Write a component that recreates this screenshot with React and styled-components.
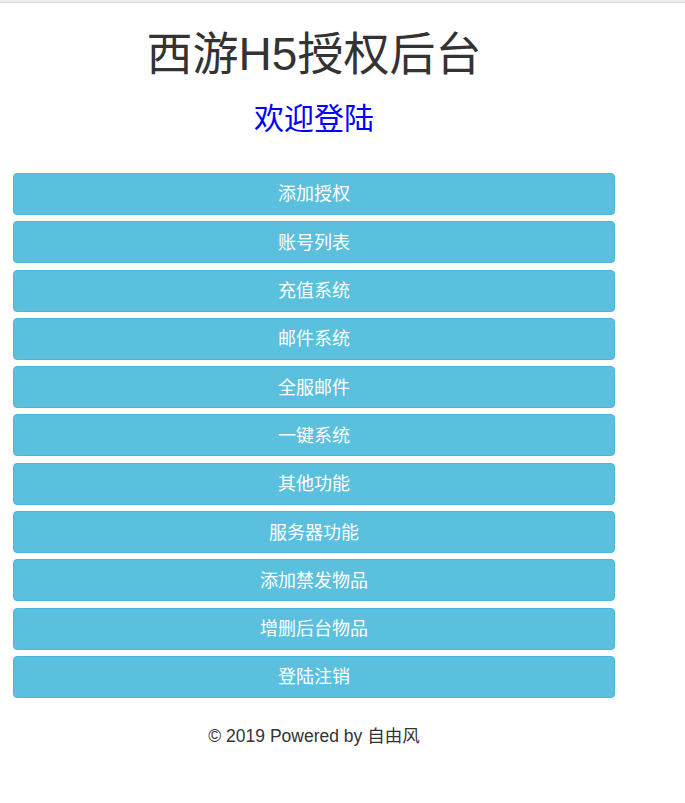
import React from "react";
import styled, { createGlobalStyle } from "styled-components";

const GlobalStyle = createGlobalStyle`
  body {
    margin: 0;
    background: #fff;
    font-family: "Liberation Sans", "Noto Sans CJK SC", sans-serif;
    color: #333;
  }
`;

const menu = [
  "添加授权",
  "账号列表",
  "充值系统",
  "邮件系统",
  "全服邮件",
  "一键系统",
  "其他功能",
  "服务器功能",
  "添加禁发物品",
  "增删后台物品",
  "登陆注销",
];

export default function App() {
  return (
    <>
      <GlobalStyle />
      <TopBar />
      <Wrap>
        <Title>西游H5授权后台</Title>
        <Welcome>欢迎登陆</Welcome>
        <MenuList>
          {menu.map((item) => (
            <MenuButton key={item} type="button">
              {item}
            </MenuButton>
          ))}
        </MenuList>
        <Footer>© 2019 Powered by 自由风</Footer>
      </Wrap>
    </>
  );
}

const TopBar = styled.div`
  height: 2px;
  background: #ececec;
  border-bottom: 1px solid #d9d9d9;
`;

const Wrap = styled.div`
  width: 602px;
  margin-left: 13px;
`;

const Title = styled.h1`
  margin: 25.7px 0 0;
  font-size: 46px;
  line-height: 50.6px;
  font-weight: 400;
  text-align: center;
  color: #333;
`;

const Welcome = styled.h2`
  margin: 23.2px 0 0;
  font-size: 30px;
  line-height: 33px;
  font-weight: 400;
  text-align: center;
  color: #0000ff;
`;

const MenuList = styled.div`
  display: flex;
  flex-direction: column;
  gap: 6.3px;
  margin-top: 37.5px;
`;

const MenuButton = styled.button`
  height: 42px;
  padding: 0 12px 3px;
  border: 1px solid #46b8da;
  border-radius: 4px;
  background: #5bc0de;
  color: #fff;
  font-family: inherit;
  font-size: 18px;
  cursor: pointer;
`;

const Footer = styled.p`
  margin: 25px 0 0;
  font-size: 17.5px;
  line-height: 26px;
  text-align: center;
  color: #333;
`;
